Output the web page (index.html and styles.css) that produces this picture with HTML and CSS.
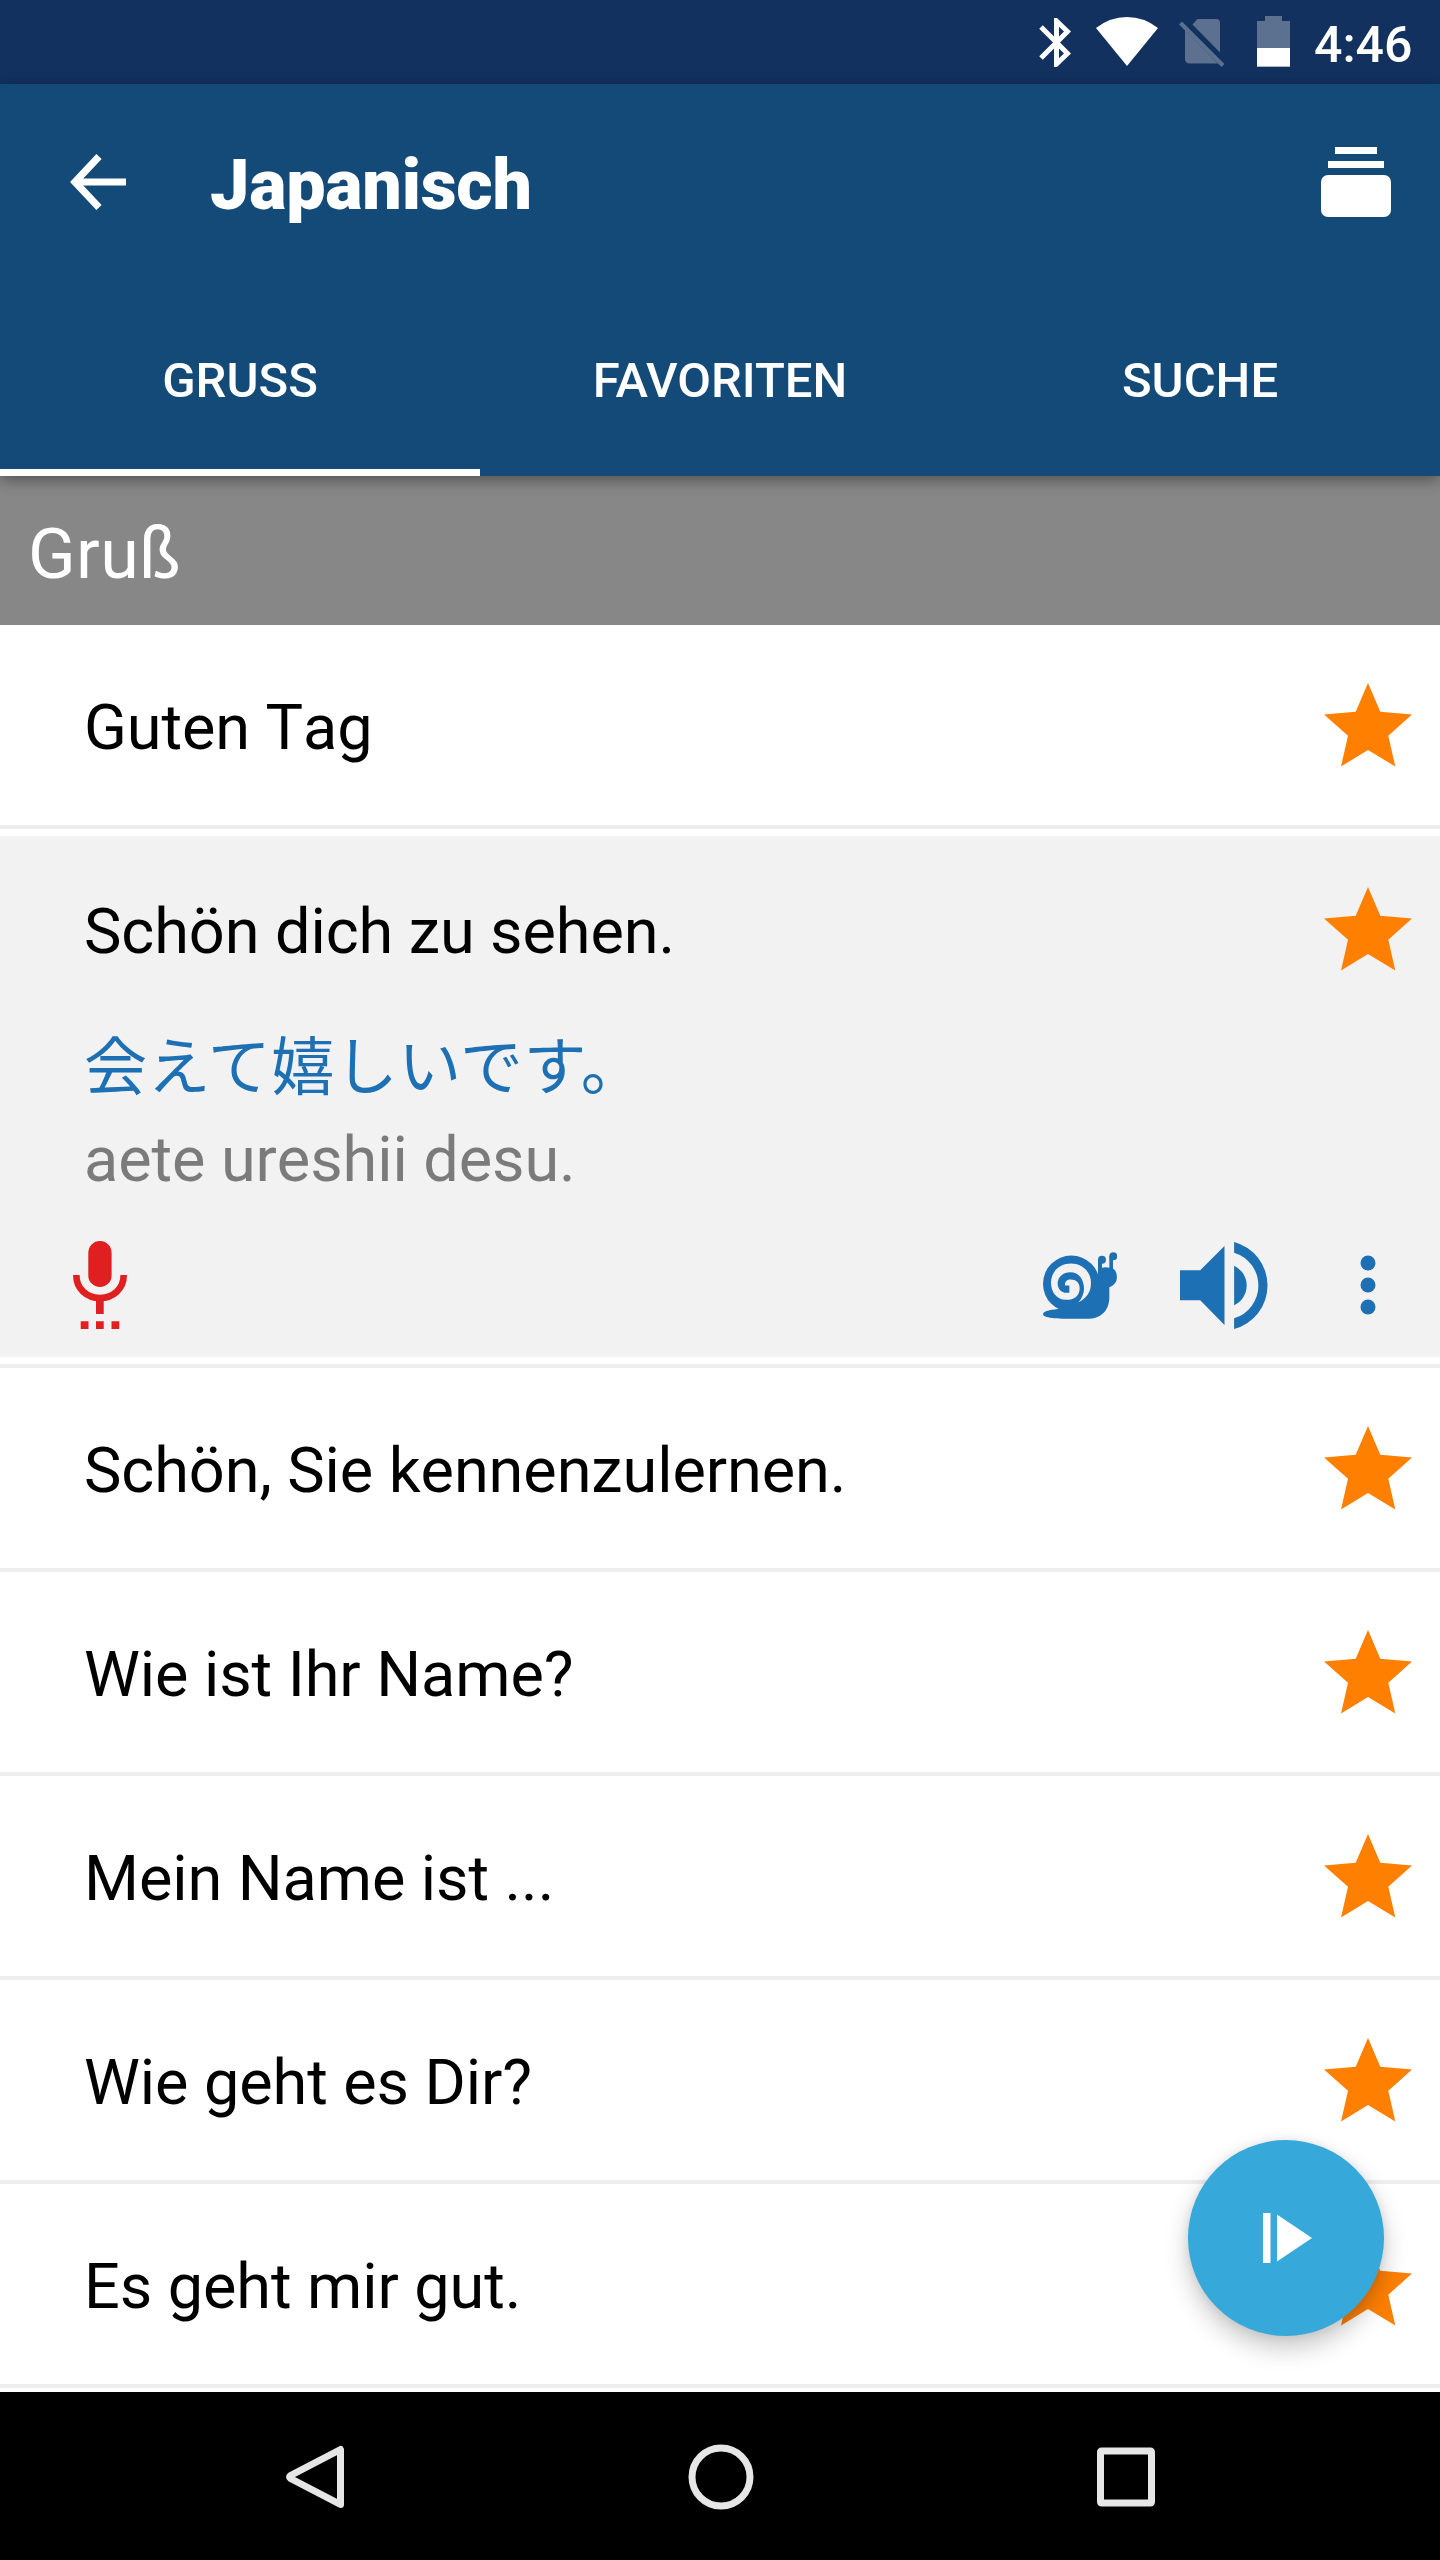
FILE: index.html
```html
<!doctype html>
<html lang="de">
<head>
<meta charset="utf-8">
<title>Japanisch</title>
<link rel="stylesheet" href="styles.css">
</head>

<body>
<svg class="defs">
	<symbol id="star" viewBox="0 0 88 84">
		<path d="M44 0L56.3 28.7L88 31.5L64.3 52.7L71.3 83.5L44 67L17 83.5L24 52.7L0 31.5L31.7 28.7Z"/>
	</symbol>
</svg>
<div class="phone">
	<div class="status">
		<svg class="bt" viewBox="0 0 32 49">
			<path d="M2 9L28.5 35.5L17.5 46V3L28.5 13.5L2 40" fill="none" stroke="#fff" stroke-width="5"/>
		</svg>
		<svg class="wifi" viewBox="0 0 62 49"><path d="M0 11Q14 0 31 0T62 11L31 49Z"/></svg>
		<svg class="sim" viewBox="0 0 46 48">
			<path d="M13.5 5.5L18.500 0H37Q41 0 41 4V33.500Z"/>
			<path d="M6 11L39 44.500H11Q6 44.500 6 39.500Z"/>
			<path d="M1.500 4L44 46.500" fill="none" stroke="#5c708f" stroke-width="4"/>
		</svg>
		<svg class="battery" viewBox="0 0 33 51">
			<path d="M8 0H25V5H33V51H0V5H8Z" fill="#5c708f"/>
			<path d="M0 32H33V50.500H0Z" fill="#fff"/>
		</svg>
		<span class="clock">4:46</span>
	</div>
	<div class="header">
		<div class="toolbar">
			<svg class="back" viewBox="0 0 56 56"><path d="M56 28H6M29 2.500L5 28L29 53.500" fill="none" stroke="#fff" stroke-width="7.200"/></svg>
			<h1 class="title">Japanisch</h1>
			<svg class="stack" viewBox="0 0 70 70">
				<rect x="14" width="42" height="7"/>
				<rect x="7" y="14" width="56" height="7"/>
				<rect y="28" width="70" height="42" rx="7"/>
			</svg>
		</div>
		<div class="tabs">
			<div class="tab active">GRUSS</div>
			<div class="tab">FAVORITEN</div>
			<div class="tab">SUCHE</div>
		</div>
	</div>
	<div class="section">Gruß</div>
	<div class="list">
		<div class="row"><span>Guten Tag</span><svg class="star"><use href="#star"/></svg></div>
		<div class="row open">
			<div class="card">
				<div class="head"><span>Schön dich zu sehen.</span><svg class="star"><use href="#star"/></svg></div>
				<div class="jp" lang="ja">会えて嬉しいです。</div>
				<div class="romaji">aete ureshii desu.</div>
				<div class="actions">
					<svg class="mic" viewBox="0 0 54 88">
						<rect x="15.300" y="0" width="23.300" height="46" rx="11.600"/>
						<path d="M3.300 34C3.300 48 14 57 27 57S50.700 48 50.700 34" fill="none" stroke="#df1f20" stroke-width="6.600"/>
						<path d="M23 57H30.700V73H23ZM7.700 80.300H15.500V88H7.700ZM23 80.300H30.700V88H23ZM38.500 80.300H46.300V88H38.500Z"/>
					</svg>
					<svg class="snail" viewBox="69 95 222 200">
						<circle cx="154" cy="190" r="85"/>
						<path d="M234 170V118H246V142Q256 139 268 142V107H279V144Q291 152 291 170Q290 192 268 200V230C268 265 248 295 200 295H165C110 295 69 292 69 281C69 271 98 267 123 265L180 240L215 190L230 160Z"/>
						<circle cx="246" cy="118" r="12"/>
						<circle cx="280" cy="107" r="12"/>
						<path class="gap" d="M175 246C200 233 213 215 213 187C213 153 186 129 153 129C119 129 93 153 93 187C93 215 110 238 138 238C163 238 179 226 179 203C179 187 168 177 152 177C140 177 134 184 135 195H148V217H139C124 217 113 205 113 189C113 169 130 155 151 155C177 155 192 177 192 204C192 221 185 234 175 246Z"/>
					</svg>
					<svg class="speaker" viewBox="0 0 88 86">
						<path d="M0 28H20L44 4V82L20 57.500H0Z"/>
						<path d="M53.500 0A44.500 44.500 0 0 1 53.500 86V75.500A34 34 0 0 0 53.500 10.500Z"/>
						<path d="M53.500 23.500A21.500 21.500 0 0 1 53.500 62.500Z"/>
					</svg>
					<svg class="more" viewBox="0 0 16 60">
						<circle cx="8" cy="8" r="7.500"/>
						<circle cx="8" cy="30" r="7.500"/>
						<circle cx="8" cy="52" r="7.500"/>
					</svg>
				</div>
			</div>
		</div>
		<div class="row"><span>Schön, Sie kennenzulernen.</span><svg class="star"><use href="#star"/></svg></div>
		<div class="row"><span>Wie ist Ihr Name?</span><svg class="star"><use href="#star"/></svg></div>
		<div class="row"><span>Mein Name ist ...</span><svg class="star"><use href="#star"/></svg></div>
		<div class="row"><span>Wie geht es Dir?</span><svg class="star"><use href="#star"/></svg></div>
		<div class="row"><span>Es geht mir gut.</span><svg class="star"><use href="#star"/></svg></div>
	</div>
	<div class="fab">
		<svg class="play" viewBox="0 0 49 50"><path d="M0 0H7.500V50H0ZM14 1.500L49 25L14 48.500Z"/></svg>
	</div>
	<div class="nav">
		<svg viewBox="0 0 66 66"><path d="M57.500 5.500V60.500L7.500 34.500Q5.500 33 7.500 31.500Z" class="tri"/></svg>
		<svg viewBox="0 0 66 66"><circle cx="33" cy="33" r="29"/></svg>
		<svg viewBox="0 0 66 66"><rect x="7.500" y="7" width="51" height="52" rx="1"/></svg>
	</div>
</div>
</body>
</html>
```

FILE: styles.css
```css
*{margin:0; padding:0; box-sizing:border-box;}
body{background:#fff; font-family:Roboto,"Noto Sans CJK JP",sans-serif;}
svg{display:block; flex:none;}
.defs{display:none;}
.phone{width:1440px; height:2560px; position:relative; overflow:hidden; display:flex; flex-direction:column;}

.status{height:84px; background:#12315f; display:flex; align-items:flex-start; padding:16px 28px 0 0; justify-content:flex-end; fill:#fff;}
.bt{width:32px; height:49px; margin:2px 25px 0 0;}
.wifi{width:62px; height:49px; margin:1px 21px 0 0;}
.sim{width:46px; height:48px; margin:3px 32px 0 0; fill:#5c708f;}
.battery{width:33px; height:51px; margin-right:24px;}
.clock{color:#fff; font-size:50px; font-weight:500; line-height:58px; width:98px; white-space:nowrap;}

.header{height:392px; background:#144a78; position:relative; z-index:1; box-shadow:0 4px 14px rgba(0,0,0,.4);}
.toolbar{height:196px; display:flex; align-items:center; padding:0 49px 0 70px;}
.back{width:56px; height:56px;}
.title{flex:1; margin:6px 0 0 84px; color:#fff; font-size:70px; font-weight:900; line-height:82px; letter-spacing:-.2px;}
.stack{width:70px; height:70px; fill:#fff;}
.tabs{height:196px; display:flex;}
.tab{flex:1; height:196px; padding-top:72px; text-align:center; color:#fff; font-size:49px; font-weight:500; line-height:58px;}
.active{border-bottom:7px solid #fff;}

.section{height:149px; padding:37px 28px 0; background:#878787; color:#fff; font-size:70px; line-height:82px; letter-spacing:.4px;}

.list{flex:1; overflow:hidden; font-size:63px; line-height:74px; color:#000; font-kerning:none; letter-spacing:-.08px;}
.row{height:204px; padding:66px 28px 0 84px; border-bottom:4px solid #eee; display:flex; justify-content:space-between;}
.star{width:88px; height:84px; margin-top:-8px; fill:#ff8000;}
.open{height:539px; padding:7px 0; display:block;}
.card{height:521px; padding:59px 28px 0 84px; background:#f2f2f2;}
.head{display:flex; justify-content:space-between; height:74px;}
.jp{margin-top:59px; line-height:80px; color:#1c70b3; font-kerning:normal; letter-spacing:.5px;}
.romaji{margin-top:15px; color:#7b7b7b;}
.actions{height:116px; margin:30px 36px 0 -11px; display:flex; align-items:center; fill:#1c70b3;}
.mic{width:54px; height:88px; margin-right:auto; fill:#df1f20;}
.snail{width:74px; height:67px; margin-right:63px;}
.gap{fill:#f2f2f2;}
.speaker{width:89px; height:87px; margin-right:91px;}
.more{width:16px; height:60px;}

.fab{width:196px; height:196px; border-radius:50%; background:#36a8da; position:absolute; left:1188px; top:2140px; box-shadow:0 12px 24px rgba(0,0,0,.22), 0 0 10px rgba(0,0,0,.08); display:flex; align-items:center; justify-content:center;}
.play{width:49px; height:50px; fill:#fff; margin-left:3px;}

.nav{height:168px; background:#000; display:flex; align-items:center; justify-content:center; gap:339px; padding:1px 0 0 1px;}
.nav svg{width:66px; height:66px; fill:none; stroke:#e6e6e6; stroke-width:7; stroke-linejoin:round;}
```
